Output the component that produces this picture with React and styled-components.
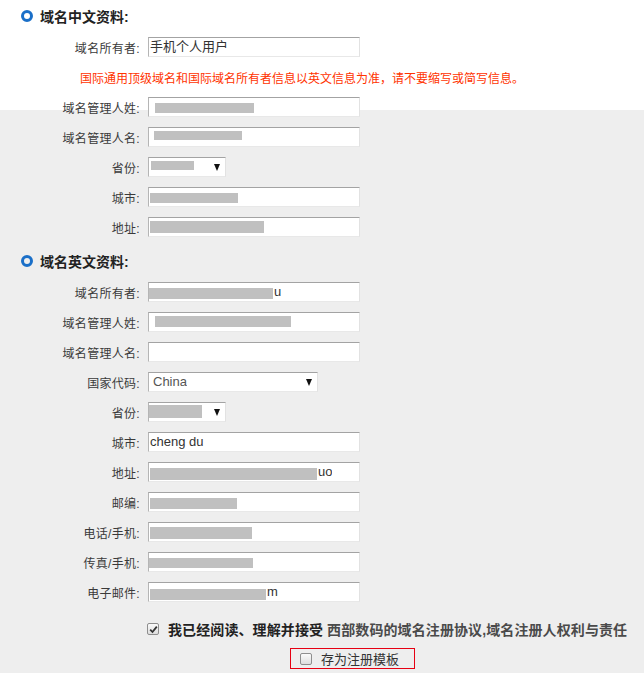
import React from 'react'
import styled, { createGlobalStyle } from 'styled-components'

const cnRows = [
   { label: '域名所有者', text: '手机个人用户' },
   { note: '国际通用顶级域名和国际域名所有者信息以英文信息为准，请不要缩写或简写信息。' },
   { label: '域名管理人姓', mask: { ml: 7, w: 99, mt: 6, h: 10 } },
   { label: '域名管理人名', mask: { ml: 6, w: 88, mt: 4, h: 9 } },
   { label: '省份', select: 78, mask: { ml: 3, w: 43, mt: 4, h: 9 } },
   { label: '城市', mask: { ml: 2, w: 88, mt: 6, h: 10 } },
   { label: '地址', mask: { ml: 2, w: 114, mt: 4, h: 12 } },
]

const enRows = [
   { label: '域名所有者', mask: { ml: 1, w: 124, mt: 6, h: 11 }, tail: 'u' },
   { label: '域名管理人姓', mask: { ml: 7, w: 136, mt: 4, h: 11 } },
   { label: '域名管理人名' },
   { label: '国家代码', select: 170, text: 'China' },
   { label: '省份', select: 78, mask: { ml: 1, w: 53, mt: 3, h: 13 } },
   { label: '城市', text: 'cheng du' },
   { label: '地址', mask: { ml: 2, w: 167, mt: 6, h: 12 }, tail: 'uo' },
   { label: '邮编', mask: { ml: 2, w: 87, mt: 6, h: 11 } },
   { label: '电话/手机', mask: { ml: 2, w: 102, mt: 5, h: 12 } },
   { label: '传真/手机', mask: { ml: 1, w: 104, mt: 6, h: 10 } },
   { label: '电子邮件', mask: { ml: 2, w: 116, mt: 7, h: 11 }, tail: 'm' },
]

const FormRow = ({ row }) => {
   if (row.note) return <Note>{row.note}</Note>
   const { mask } = row
   return (
      <Row>
         <Label>{row.label}:</Label>
         <Field $w={row.select || 212}>
            <FieldBody>
               {row.text && <FieldText $select={!!row.select}>{row.text}</FieldText>}
               {mask && <Mask $ml={mask.ml} $mt={mask.mt} $w={mask.w} $h={mask.h} />}
               {row.tail && <FieldText>{row.tail}</FieldText>}
            </FieldBody>
            {row.select && <Arrow />}
         </Field>
      </Row>
   )
}

const Section = ({ title, rows, first }) => (
   <>
      <Title $first={first}>
         <Ring />
         {title}
      </Title>
      {rows.map((row, i) => (
         <FormRow key={i} row={row} />
      ))}
   </>
)

const App = () => {
   return (
      <Page>
         <GlobalStyle />
         <Section title="域名中文资料:" rows={cnRows} first />
         <Section title="域名英文资料:" rows={enRows} />
         <AgreeRow>
            <CheckBox>
               <svg width="9" height="9" viewBox="0 0 9 9">
                  <path d="M1.2 4.6 L3.5 7 L7.8 1.6" fill="none" stroke="#333" strokeWidth="1.8" />
               </svg>
            </CheckBox>
            <AgreeText>
               我已经阅读、理解并接受 <Terms>西部数码的域名注册协议,域名注册人权利与责任</Terms>
            </AgreeText>
         </AgreeRow>
         <SaveBox>
            <CheckBox />
            <SaveText>存为注册模板</SaveText>
         </SaveBox>
      </Page>
   )
}

const GlobalStyle = createGlobalStyle`
   html, body {
      margin: 0;
      padding: 0;
   }
   body {
      min-height: 673px;
      background-color: #eeeeee;
      background-image: linear-gradient(#ffffff 0, #ffffff 110px, #eeeeee 110px);
      background-repeat: no-repeat;
      font-family: "Liberation Sans", "Noto Sans CJK SC", sans-serif;
      color: #333;
   }
`

const Page = styled.div`
   width: 644px;
   display: flex;
   flex-direction: column;
`

const Title = styled.div`
   height: 32px;
   margin-top: ${({ $first }) => ($first ? '0' : '3px')};
   display: flex;
   align-items: center;
   gap: 7px;
   padding-left: 21px;
   font-size: 14px;
   font-weight: bold;
   color: #222;
`

const Ring = styled.span`
   width: 12px;
   height: 12px;
   box-sizing: border-box;
   border: 3px solid #1a6fc8;
   border-radius: 50%;
`

const Row = styled.div`
   height: 30px;
   display: flex;
   align-items: center;
`

const Label = styled.div`
   width: 140px;
   flex-shrink: 0;
   text-align: right;
   font-size: 12px;
   letter-spacing: 0.3px;
   color: #3a3a3a;
`

const Field = styled.div`
   width: ${({ $w }) => $w}px;
   height: 20px;
   margin-left: 8px;
   box-sizing: border-box;
   display: flex;
   align-items: center;
   justify-content: space-between;
   background: #fff;
   border-top: 1px solid #a3a3a3;
   border-left: 1px solid #b5b5b5;
   border-right: 1px solid #e2e2e2;
   border-bottom: 1px solid #e8e8e8;
`

const FieldBody = styled.div`
   display: flex;
   align-items: flex-start;
   align-self: stretch;
   overflow: hidden;
`

const FieldText = styled.span`
   padding-left: ${({ $select }) => ($select ? '4px' : '1px')};
   font-size: 13px;
   line-height: 18px;
   color: ${({ $select }) => ($select ? '#555' : '#333')};
   white-space: nowrap;
`

const Mask = styled.span`
   flex-shrink: 0;
   margin-left: ${({ $ml }) => $ml - 1}px;
   margin-top: ${({ $mt }) => $mt - 1}px;
   width: ${({ $w }) => $w}px;
   height: ${({ $h }) => $h}px;
   background: #c0c0c0;
`

const Arrow = styled.span`
   margin-right: 5px;
   width: 0;
   height: 0;
   border-left: 3.5px solid transparent;
   border-right: 3.5px solid transparent;
   border-top: 7px solid #111;
`

const Note = styled.div`
   height: 30px;
   display: flex;
   align-items: center;
   padding-left: 80px;
   font-size: 12px;
   color: #ff3300;
`

const AgreeRow = styled.div`
   height: 30px;
   margin-top: 7px;
   padding-left: 147px;
   display: flex;
   align-items: center;
   gap: 9px;
`

const CheckBox = styled.span`
   width: 12px;
   height: 12px;
   box-sizing: border-box;
   flex-shrink: 0;
   display: flex;
   align-items: center;
   justify-content: center;
   border: 1px solid #8e8e8e;
   border-radius: 2px;
   background: linear-gradient(#fafafa, #dedede);
`

const AgreeText = styled.span`
   font-size: 14px;
   font-weight: bold;
   letter-spacing: 0.1px;
   color: #222;
   white-space: nowrap;
`

const Terms = styled.span`
   color: #4a4a4a;
`

const SaveBox = styled.div`
   width: 125px;
   height: 21px;
   margin-top: 4px;
   margin-left: 290px;
   box-sizing: border-box;
   padding-left: 9px;
   display: flex;
   align-items: center;
   gap: 9px;
   border: 1px solid #e60012;
`

const SaveText = styled.span`
   font-size: 13px;
   color: #333;
`

export default App
